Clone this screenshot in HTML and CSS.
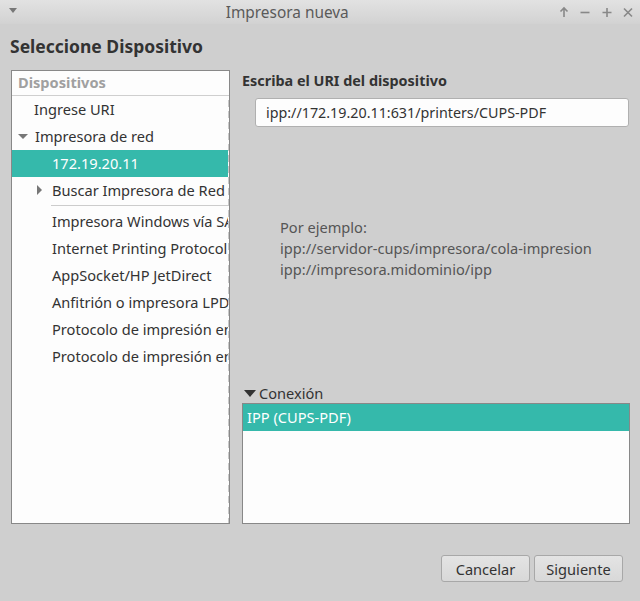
FILE: index.html
```html
<!DOCTYPE html>
<html lang="es">
<head>
<meta charset="utf-8">
<title>Impresora nueva</title>
<link rel="stylesheet" href="styles.css">
</head>
<body>
<div class="window">
  <header class="titlebar">
    <span class="menu-btn"><svg width="10" height="6" viewBox="0 0 10 6"><path d="M1 0h8L5 5z" fill="#777"/></svg></span>
    <span class="title">Impresora nueva</span>
    <span class="controls">
      <svg width="12" height="12" viewBox="0 0 12 12"><path d="M6 2v9M2.5 5.5L6 2l3.5 3.5" stroke="#888" stroke-width="1.6" fill="none"/></svg>
      <svg width="12" height="12" viewBox="0 0 12 12"><path d="M1.5 6.5h9" stroke="#888" stroke-width="1.6"/></svg>
      <svg width="12" height="12" viewBox="0 0 12 12"><path d="M1.5 6.5h9M6 2v9" stroke="#888" stroke-width="1.6"/></svg>
      <svg width="12" height="12" viewBox="0 0 12 12"><path d="M2 2.5l8 8M10 2.5l-8 8" stroke="#888" stroke-width="1.6"/></svg>
    </span>
  </header>
  <main class="content">
    <h1 class="heading">Seleccione Dispositivo</h1>
    <div class="panes">
      <div class="tree">
        <div class="tree-header">Dispositivos</div>
        <div class="tree-body">
          <div class="row lvl1">Ingrese URI</div>
          <div class="row lvl0"><span class="exp down"></span>Impresora de red</div>
          <div class="row lvl2 selected">172.19.20.11</div>
          <div class="row lvl1b"><span class="exp right"></span>Buscar Impresora de Red</div>
          <div class="sep"></div>
          <div class="row lvl2">Impresora Windows vía SAMBA</div>
          <div class="row lvl2">Internet Printing Protocol (ipp)</div>
          <div class="row lvl2">AppSocket/HP JetDirect</div>
          <div class="row lvl2">Anfitrión o impresora LPD/LPR</div>
          <div class="row lvl2">Protocolo de impresión en línea</div>
          <div class="row lvl2">Protocolo de impresión en red</div>
          <div class="colline"></div>
        </div>
      </div>
      <div class="detail">
        <div class="label-bold">Escriba el URI del dispositivo</div>
        <div class="entry">ipp://172.19.20.11:631/printers/CUPS-PDF</div>
        <div class="examples">
          <div>Por ejemplo:</div>
          <div>ipp://servidor-cups/impresora/cola-impresion</div>
          <div>ipp://impresora.midominio/ipp</div>
        </div>
        <div class="expander"><span class="exp-tri"></span>Conexión</div>
        <div class="conn-list">
          <div class="conn-row">IPP (CUPS-PDF)</div>
        </div>
      </div>
    </div>
    <div class="buttons">
      <button class="btn">Cancelar</button>
      <button class="btn">Siguiente</button>
    </div>
  </main>
</div>
</body>
</html>
```
FILE: styles.css
```css
* { box-sizing: border-box; }
html, body { margin: 0; padding: 0; }
body {
  width: 640px;
  height: 601px;
  overflow: hidden;
  background: #cfcfcf;
  font-family: "Noto Sans", "Open Sans", sans-serif;
  font-size: 14.6px;
  color: #333;
}
.window { display: flex; flex-direction: column; height: 601px; }
.titlebar {
  height: 24px;
  display: flex;
  align-items: center;
  background: linear-gradient(#e2e2e2, #d2d2d2);
}
.menu-btn { width: 24px; display: flex; justify-content: center; margin-left: 1px; margin-top: -2px; }
.title {
  flex: 1;
  text-align: center;
  color: #5a5a5a;
  font-size: 15.4px;
  margin-left: -8px;
}
.controls { display: flex; gap: 9.5px; padding-right: 6px; align-items: center; }
.controls svg { display: block; }
.content { flex: 1; display: flex; flex-direction: column; padding: 0 10px 0 11px; }
.heading {
  margin: 9px 0 0 -1px;
  font-size: 17.5px;
  font-weight: bold;
  color: #333;
  line-height: 26px;
  height: 37px;
}
.panes { display: flex; gap: 12px; height: 454px; }
.tree {
  width: 220px;
  border: 1px solid #888;
  background: #fdfdfd;
  display: flex;
  flex-direction: column;
  overflow: hidden;
}
.tree-header {
  height: 25px;
  line-height: 23px;
  padding-left: 6px;
  font-weight: bold;
  color: #a0a0a0;
  border-bottom: 1px solid #cfcfcf;
  flex: none;
}
.tree-body { position: relative; flex: 1; width: 217px; overflow: hidden; }
.row {
  height: 27px;
  line-height: 26px;
  white-space: nowrap;
  display: flex;
  align-items: center;
  color: #333;
  padding-bottom: 1px;
}
.lvl0 { padding-left: 5px; }
.lvl1 { padding-left: 22px; }
.lvl1b { padding-left: 25px; }
.lvl2 { padding-left: 40px; }
.row.selected { background: #35b9ab; color: #fff; margin-right: -3px; }
.exp { display: inline-block; width: 0; height: 0; margin-right: 9px; }
.exp.down { border-left: 5px solid transparent; border-right: 5px solid transparent; border-top: 5px solid #777; margin-right: 7px; margin-left: 1px; }
.exp.right { border-top: 5px solid transparent; border-bottom: 5px solid transparent; border-left: 5px solid #777; margin-right: 10px; }
.sep { height: 3px; margin-left: 39px; border-top: 1px solid #ccc; margin-top: 1px; }
.colline {
  position: absolute;
  top: 0; bottom: 0; right: 0;
  width: 1px;
  background: repeating-linear-gradient(#fdfdfd 0 4px, #c8c8c8 4px 11px);
}
.detail { flex: 1; display: flex; flex-direction: column; }
.label-bold { font-weight: bold; height: 28px; line-height: 22px; color: #333; font-size: 14.4px; }
.entry {
  margin-left: 13px;
  width: 374px;
  height: 29px;
  line-height: 27px;
  padding-left: 10px;
  background: #fdfdfd;
  border: 1px solid #b0b0b0;
  border-radius: 3px;
  color: #333;
  font-size: 14.3px;
}
.examples {
  margin: 90px 0 0 38px;
  line-height: 21px;
  color: #555;
  height: 168px;
}
.expander { display: flex; align-items: center; height: 19px; color: #333; padding-left: 2px; padding-bottom: 1px; }
.exp-tri { width: 0; height: 0; border-left: 6px solid transparent; border-right: 6px solid transparent; border-top: 7px solid #333; margin-right: 3px; }
.conn-list {
  width: 388px;
  height: 121px;
  border: 1px solid #888;
  background: #fdfdfd;
}
.conn-row { height: 27px; line-height: 27px; background: #35b9ab; color: #fff; padding-left: 4px; }
.buttons { display: flex; justify-content: flex-end; gap: 4px; margin-top: 31px; padding-right: 7px; }
.btn {
  font-family: inherit;
  font-size: 14.6px;
  color: #333;
  height: 27px;
  border: 1px solid #a8a8a8;
  border-radius: 3px;
  background: linear-gradient(#e4e4e4, #d8d8d8);
  padding: 0;
  width: 89px;
}
```
